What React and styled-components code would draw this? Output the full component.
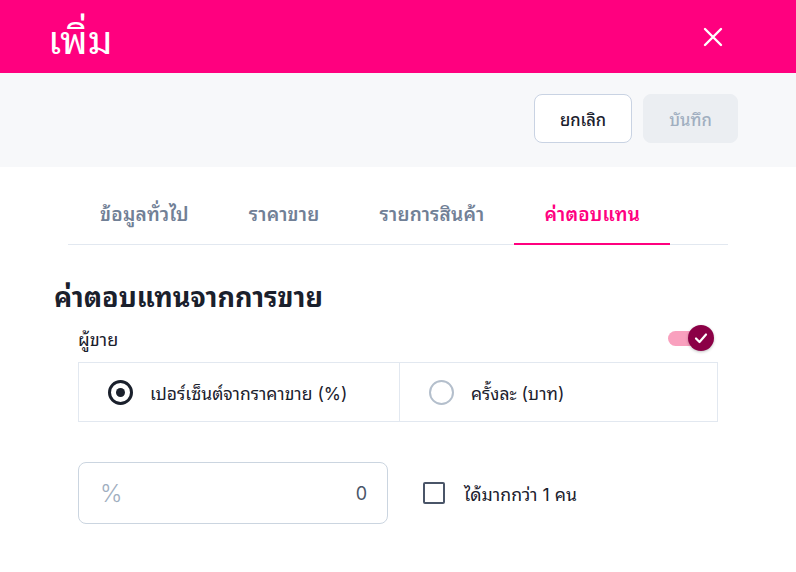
import styled, { createGlobalStyle } from "styled-components";

const GlobalStyle = createGlobalStyle`
  body {
    margin: 0;
    background: #ffffff;
    font-family: "Inter", "Noto Sans Thai Looped", sans-serif;
    color: #1a202c;
  }
`;

const Page = styled.div`
  width: 796px;
  height: 572px;
  overflow: hidden;
  background: #ffffff;
`;

const Header = styled.header`
  height: 73px;
  background: #ff007f;
  display: flex;
  align-items: center;
  justify-content: space-between;
  padding: 0 73px 0 48px;
`;

const Title = styled.h1`
  margin: 0;
  color: #ffffff;
  font-size: 39px;
  font-weight: 400;
`;

const CloseButton = styled.button`
  border: 0;
  background: none;
  padding: 0;
  display: flex;
  cursor: pointer;
`;

const ActionBar = styled.div`
  height: 90px;
  background: #f7f8fa;
  display: flex;
  align-items: center;
  justify-content: flex-end;
  gap: 11px;
  padding: 0 58px 4px 0;
`;

const Button = styled.button`
  height: 49px;
  width: ${(p) => p.$w}px;
  padding: 0;
  border-radius: 8px;
  font-family: inherit;
  font-size: 16.5px;
  font-weight: 500;
  border: 1px solid ${(p) => (p.$disabled ? "#ebeef2" : "#c9d3e3")};
  background: ${(p) => (p.$disabled ? "#ebeef2" : "#ffffff")};
  color: ${(p) => (p.$disabled ? "#a0aec0" : "#1a202c")};
`;

const Body = styled.div`
  padding: 22px 68px 0 54px;
`;

const Tabs = styled.nav`
  display: flex;
  margin-left: 14px;
  padding-left: 2px;
  border-bottom: 1px solid #e2e8f0;
`;

const Tab = styled.div`
  padding: 14px 30px 16px;
  font-size: 19px;
  font-weight: 600;
  letter-spacing: 0.2px;
  line-height: 24px;
  color: ${(p) => (p.$active ? "#ff007f" : "#718096")};
  border-bottom: 2px solid ${(p) => (p.$active ? "#ff007f" : "transparent")};
  margin-bottom: -1px;
`;

const SectionTitle = styled.h2`
  margin: 38px 0 0;
  font-size: 27px;
  font-weight: 700;
  line-height: 30px;
  color: #1a202c;
`;

const Content = styled.div`
  padding: 0 10px 0 24px;
`;

const LabelRow = styled.div`
  display: flex;
  align-items: center;
  justify-content: space-between;
  margin-top: 11px;
  height: 28px;
  padding-right: 4px;
`;

const Label = styled.span`
  font-size: 18px;
  color: #1a202c;
`;

const Toggle = styled.div`
  position: relative;
  width: 46px;
  height: 26px;
  display: flex;
  align-items: center;
`;

const Track = styled.div`
  width: 32px;
  height: 15px;
  border-radius: 8px;
  background: #f9a0be;
`;

const Thumb = styled.div`
  position: absolute;
  right: 0;
  top: 0;
  width: 26px;
  height: 26px;
  border-radius: 50%;
  background: #8b0046;
  display: flex;
  align-items: center;
  justify-content: center;
  box-shadow: 0 1px 3px rgba(0, 0, 0, 0.25);
`;

const RadioGroup = styled.div`
  margin-top: 10px;
  display: grid;
  grid-template-columns: 320px 1fr;
  border: 1px solid #e2e8f0;
  height: 58px;
`;

const RadioOption = styled.label`
  display: flex;
  align-items: center;
  gap: 17px;
  padding-left: 29px;
  font-size: 17.5px;
  color: #1a202c;
  & + & {
    border-left: 1px solid #e2e8f0;
  }
`;

const RadioCircle = styled.span`
  box-sizing: border-box;
  width: 25px;
  height: 25px;
  border-radius: 50%;
  border: ${(p) => (p.$checked ? "3px solid #1a202c" : "2px solid #b4bfcc")};
  display: flex;
  align-items: center;
  justify-content: center;
  &::after {
    content: "";
    display: ${(p) => (p.$checked ? "block" : "none")};
    width: 9px;
    height: 9px;
    border-radius: 50%;
    background: #1a202c;
  }
`;

const InputRow = styled.div`
  display: flex;
  align-items: center;
  gap: 35px;
  margin-top: 40px;
`;

const InputBox = styled.div`
  box-sizing: border-box;
  width: 310px;
  height: 62px;
  border: 1px solid #cbd5e0;
  border-radius: 8px;
  display: flex;
  align-items: center;
  justify-content: space-between;
  padding: 0 20px 0 21px;
`;

const Unit = styled.span`
  font-size: 24px;
  color: #a0aec0;
  font-weight: 300;
`;

const Value = styled.span`
  font-size: 18px;
  color: #4a5568;
`;

const CheckLabel = styled.label`
  display: flex;
  align-items: center;
  gap: 19px;
  font-size: 17.7px;
  color: #1a202c;
`;

const CheckBox = styled.span`
  box-sizing: border-box;
  width: 22px;
  height: 22px;
  border: 2px solid #4a5568;
  border-radius: 2px;
`;

export default function App() {
  return (
    <Page>
      <GlobalStyle />
      <Header>
        <Title>เพิ่ม</Title>
        <CloseButton>
          <svg width="20" height="20" viewBox="0 0 20 20">
            <path d="M2 2 L18 18 M18 2 L2 18" stroke="#fff" strokeWidth="2.4" strokeLinecap="round" />
          </svg>
        </CloseButton>
      </Header>
      <ActionBar>
        <Button $w={98}>ยกเลิก</Button>
        <Button $w={95} $disabled>บันทึก</Button>
      </ActionBar>
      <Body>
        <Tabs>
          <Tab>ข้อมูลทั่วไป</Tab>
          <Tab>ราคาขาย</Tab>
          <Tab>รายการสินค้า</Tab>
          <Tab $active>ค่าตอบแทน</Tab>
        </Tabs>
        <SectionTitle>ค่าตอบแทนจากการขาย</SectionTitle>
        <Content>
          <LabelRow>
            <Label>ผู้ขาย</Label>
            <Toggle>
              <Track />
              <Thumb>
                <svg width="14" height="14" viewBox="0 0 14 14">
                  <path d="M2 7.5 L5.5 11 L12 3.5" fill="none" stroke="#fff" strokeWidth="2.2" strokeLinecap="round" strokeLinejoin="round" />
                </svg>
              </Thumb>
            </Toggle>
          </LabelRow>
          <RadioGroup>
            <RadioOption>
              <RadioCircle $checked />
              เปอร์เซ็นต์จากราคาขาย (%)
            </RadioOption>
            <RadioOption>
              <RadioCircle />
              ครั้งละ (บาท)
            </RadioOption>
          </RadioGroup>
          <InputRow>
            <InputBox>
              <Unit>%</Unit>
              <Value>0</Value>
            </InputBox>
            <CheckLabel>
              <CheckBox />
              ได้มากกว่า 1 คน
            </CheckLabel>
          </InputRow>
        </Content>
      </Body>
    </Page>
  );
}
